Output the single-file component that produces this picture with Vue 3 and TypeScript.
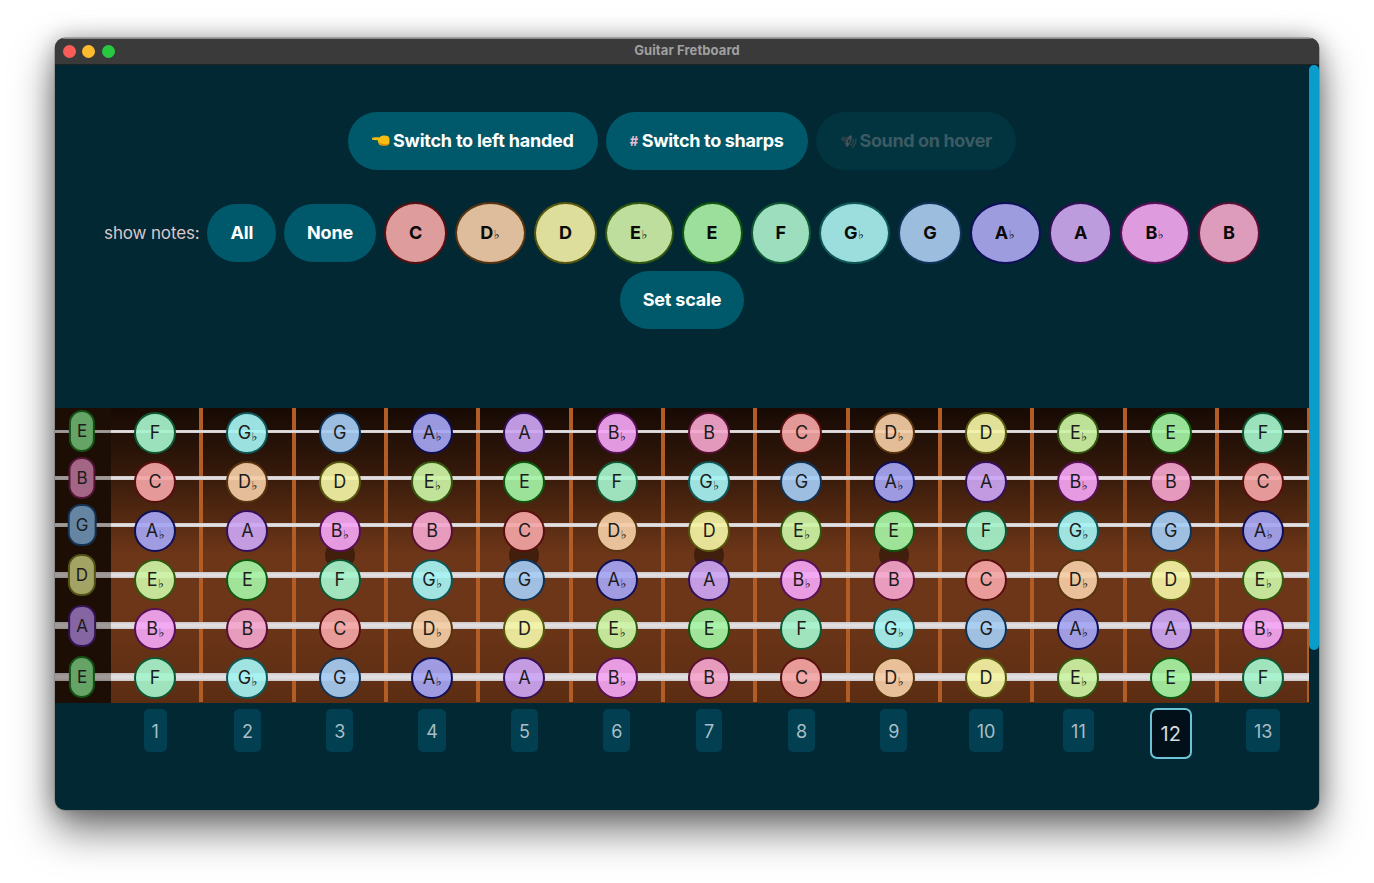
<script setup lang="ts">
const names = ['C', 'D', 'D', 'E', 'E', 'F', 'G', 'G', 'A', 'A', 'B', 'B']
const flats = [false, true, false, true, false, false, true, false, true, false, true, false]
const chroma = names.map((letter, i) => ({ letter, flat: flats[i], hue: i * 30 }))
const noteOf = (i: number) => chroma[i % 12]

const strings = [
  { open: 4, y: 23, h: 3 },
  { open: 11, y: 70, h: 4 },
  { open: 7, y: 117, h: 4.5 },
  { open: 2, y: 167, h: 6 },
  { open: 9, y: 217.5, h: 7 },
  { open: 4, y: 269, h: 7.5 }
]
const frets = Array.from({ length: 13 }, (_, i) => i + 1)
const inlays = [3, 5, 7, 9]
</script>

<template>
  <div class="page">
    <div class="window">
      <header class="titlebar">
        <div class="lights">
          <span class="light red"></span>
          <span class="light yellow"></span>
          <span class="light green"></span>
        </div>
        <span class="title">Guitar Fretboard</span>
      </header>
      <div class="body">
        <main class="main">
          <div class="actions">
            <button class="pill">
              <svg class="hand" viewBox="0 0 18 11" width="18" height="11">
                <path d="M0.500 2.800c2.200-.5 4.800-.6 7-.4 1-1.300 2.700-2.100 4.500-1.900l2.500.3c1.700.2 3 1.500 3 3.300v2.900c0 2.100-1.500 3.500-3.600 3.500h-3.800c-2.100 0-3.700-1.300-4-3.300L6 5.200c-1.900.1-3.800 0-5.400-.4-.8-.2-.9-1.700-.1-2z" fill="#f8bd14" />
                <path d="M6.600 7.300c.6 2 2.100 3.200 4.200 3.200h3.500c1.500 0 2.700-.7 3.200-1.900-3.200 1-7.500 .6-10.900-1.300z" fill="#e08a08" />
              </svg>
              <span class="wide">Switch to left handed</span>
            </button>
            <button class="pill">
              <span class="hash">#</span>
              <span>Switch to sharps</span>
            </button>
            <button class="pill off" disabled>
              <svg class="speaker" viewBox="0 0 18 16" width="17" height="15">
                <g transform="rotate(22 8 8)">
                  <path d="M1 5.800h3.500L9.500 1.500v13L4.500 10.200H1z" fill="#2b3f46" />
                  <ellipse cx="9.500" cy="8" rx="2.200" ry="6.500" fill="#435760" />
                  <ellipse cx="9.700" cy="8" rx="1" ry="2.600" fill="#1c2f36" />
                  <path d="M13.300 4.800c1 2 1 4.400 0 6.400M15.600 3c1.500 3.200 1.500 6.800 0 10" fill="none" stroke="#2f444b" stroke-width="1.500" stroke-linecap="round" />
                </g>
              </svg>
              <span class="narrow">Sound on hover</span>
            </button>
          </div>

          <div class="shows">
            <span class="show-label">show notes:</span>
            <button class="pill small">All</button>
            <button class="pill small">None</button>
            <button
              v-for="n in chroma"
              :key="n.hue"
              class="note-toggle"
              :style="{ background: `hsl(${n.hue},50%,74%)`, borderColor: `hsl(${n.hue},70%,20%)` }"
            >
              {{ n.letter }}<span v-if="n.flat" class="flat">♭</span>
            </button>
            <button class="pill small">Set scale</button>
          </div>

          <section class="board">
            <div v-for="(s, r) in strings" :key="r" class="board-row">
              <div class="nut"></div>
              <div v-for="f in frets" :key="f" class="cell">
                <span v-if="r === 2 && inlays.includes(f)" class="inlay"></span>
                <span
                  class="note"
                  :style="{
                    background: `hsla(${noteOf(s.open + f).hue},76%,80%,.92)`,
                    borderColor: `hsl(${noteOf(s.open + f).hue},70%,20%)`
                  }"
                >
                  {{ noteOf(s.open + f).letter }}<span v-if="noteOf(s.open + f).flat" class="flat">♭</span>
                </span>
              </div>
            </div>
            <div
              v-for="(s, r) in strings"
              :key="'s' + r"
              class="string"
              :style="{ top: `${s.y - s.h / 2}px`, height: `${s.h}px` }"
            >
              <span
                class="open"
                :style="{
                  background: `hsl(${noteOf(s.open).hue},25%,52%)`,
                  borderColor: `hsl(${noteOf(s.open).hue},60%,20%)`
                }"
              >{{ noteOf(s.open).letter }}</span>
            </div>
          </section>

          <div class="numbers">
            <div></div>
            <div v-for="f in frets" :key="f" class="num-cell">
              <span class="num" :class="{ selected: f === 12 }">{{ f }}</span>
            </div>
          </div>
        </main>
        <aside class="track"><div class="thumb"></div></aside>
      </div>
    </div>
  </div>
</template>

<style scoped>
.page {
  height: 883px;
  box-sizing: border-box;
  padding: 38px 55px 73px;
  background: #fff;
  font-family: Inter, "Liberation Sans", sans-serif;
}
.window {
  height: 772px;
  border-radius: 10px;
  overflow: hidden;
  display: flex;
  flex-direction: column;
  box-shadow: 0 0 0 0.5px #777, 0 20px 42px rgba(0, 0, 0, 0.55), 0 0 22px rgba(0, 0, 0, 0.28);
  background: #012833;
}
.titlebar {
  height: 27px;
  flex: none;
  background: #3a3a3a;
  border-top: 1px solid #8a8a8a;
  box-sizing: border-box;
  border-bottom: 1px solid #222;
  padding-bottom: 3px;
  display: flex;
  align-items: center;
  justify-content: center;
  position: relative;
}
.lights {
  position: absolute;
  left: 7.500px;
  top: 5.500px;
  display: flex;
  gap: 6.500px;
}
.light {
  width: 13px;
  height: 13px;
  border-radius: 50%;
}
.red { background: #fb5c57; }
.yellow { background: #fdbb2d; }
.green { background: #28c840; }
.title {
  font-size: 13px;
  font-weight: 700;
  letter-spacing: 0.1px;
  color: #a0a0a0;
}
.body {
  flex: 1;
  display: flex;
  min-height: 0;
}
.main {
  flex: 1;
  min-width: 0;
  padding-top: 47px;
}
.track {
  width: 10px;
  flex: none;
}
.thumb {
  height: 585px;
  background: #0a9dcb;
  border-radius: 5px;
}
.actions {
  display: flex;
  justify-content: center;
  gap: 8px;
}
.actions .pill {
  letter-spacing: -0.32px;
}
.actions .wide {
  letter-spacing: -0.22px;
}
.actions .narrow {
  letter-spacing: -0.38px;
}
.pill {
  height: 58px;
  padding: 0 24px 1px;
  border: none;
  border-radius: 29px;
  background: #00596a;
  color: #fff;
  font-family: inherit;
  font-size: 18px;
  font-weight: 700;
  letter-spacing: -0.2px;
  display: inline-flex;
  align-items: center;
  gap: 3px;
}
.pill.small {
  padding: 0 23px 1px;
}
.pill.off {
  background: #01343f;
  color: #3c5a63;
}
.hash {
  color: #e4bcd4;
  font-size: 13px;
  margin-right: 1px;
}
.shows {
  margin-top: 32px;
  display: flex;
  flex-wrap: wrap;
  justify-content: center;
  align-items: center;
  column-gap: 8px;
  row-gap: 7px;
}
.show-label {
  font-size: 17px;
  letter-spacing: -0.15px;
  color: #dcc6cc;
}
.note-toggle {
  height: 62px;
  padding: 0 23px 1px;
  border: 2px solid;
  border-radius: 50%;
  color: #0a0a0a;
  font-family: inherit;
  font-size: 18px;
  font-weight: 700;
  display: inline-flex;
  align-items: center;
  justify-content: center;
}
.flat {
  font-family: "DejaVu Sans", sans-serif;
  font-size: 12px;
  font-weight: 400;
  color: #000;
  align-self: flex-end;
  line-height: 1;
  margin-left: 0.500px;
}
.note-toggle .flat {
  margin-bottom: 20px;
  margin-right: 1.500px;
}
.board {
  margin-top: 79px;
  height: 295px;
  position: relative;
  overflow: hidden;
  background: linear-gradient(180deg, #170a04 0%, #2e1609 18%, #4a240f 32%, #6e3618 50%, #6e3618 68%, #5c2d13 100%);
}
.board-row {
  display: grid;
  grid-template-columns: 56px repeat(13, 92.33px);
  height: 49px;
}
.board-row:last-of-type {
  height: 50px;
}
.nut {
  background: #1c0d05;
  margin-bottom: -1px;
}
.cell {
  position: relative;
  border-right: 4px solid #b25c26;
  display: flex;
  align-items: center;
  justify-content: center;
}
.inlay {
  position: absolute;
  left: 50%;
  bottom: -15px;
  width: 30px;
  height: 30px;
  margin-left: -15px;
  border-radius: 50%;
  background: rgba(30, 12, 4, 0.55);
}
.note {
  position: relative;
  z-index: 2;
  box-sizing: border-box;
  width: 42px;
  height: 42px;
  border: 2px solid;
  border-radius: 50%;
  display: flex;
  align-items: center;
  justify-content: center;
  color: #1c1c1c;
  font-size: 18px;
  line-height: 1;
  padding-top: 1px;
}
.note .flat {
  margin-bottom: 9px;
}
.string {
  position: absolute;
  left: 0;
  right: 0;
  z-index: 1;
  background:
    linear-gradient(180deg, rgba(60, 50, 60, 0.14), rgba(60, 50, 60, 0) 35%, rgba(60, 50, 60, 0) 65%, rgba(60, 50, 60, 0.14)),
    linear-gradient(90deg, #a09a98 56px, #e2dee0 56px);
}
.open {
  position: absolute;
  left: 27px;
  top: 50%;
  transform: translate(-50%, -50%);
  height: 42px;
  padding: 0 6px;
  box-sizing: border-box;
  border: 2px solid;
  border-radius: 13px;
  display: flex;
  align-items: center;
  color: #1c1c1c;
  font-size: 17px;
}
.numbers {
  display: grid;
  grid-template-columns: 56px repeat(13, 92.33px);
  padding-top: 6px;
}
.num-cell {
  padding-right: 4px;
  display: flex;
  justify-content: center;
  align-items: flex-start;
}
.num {
  height: 43px;
  padding: 1px 8px 0;
  box-sizing: border-box;
  border-radius: 5px;
  background: #023f50;
  color: #a9bec6;
  font-size: 18px;
  display: flex;
  align-items: center;
}
.num.selected {
  height: 51px;
  box-sizing: border-box;
  padding: 0 9px;
  margin-top: -1px;
  background: #021119;
  border: 2px solid #6cc3d8;
  border-radius: 7px;
  color: #d5dde0;
  font-size: 20px;
}
</style>

<style>
html, body {
  margin: 0;
  background: #fff;
}
</style>
